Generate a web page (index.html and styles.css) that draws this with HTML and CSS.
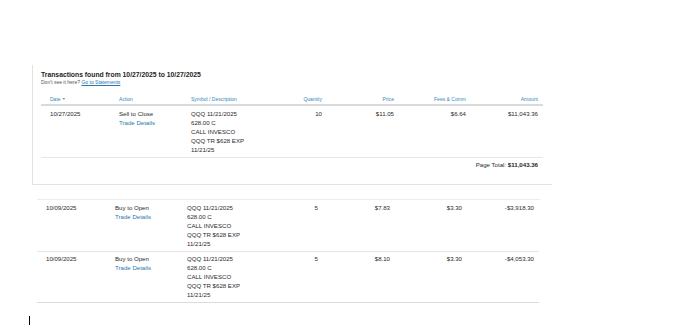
FILE: index.html
```html
<!DOCTYPE html>
<html>
<head>
<meta charset="utf-8">
<link rel="stylesheet" href="styles.css">
</head>
<body>
<div class="page">
  <section class="card">
    <h1 class="title">Transactions found from 10/27/2025 to 10/27/2025</h1>
    <p class="sub">Don't see it here? <a href="#" class="link-u">Go to Statements</a></p>
    <div class="grid head">
      <div class="c">Date <span class="arrow">&#9660;</span></div>
      <div class="c">Action</div>
      <div class="c">Symbol / Description</div>
      <div class="c r">Quantity</div>
      <div class="c r">Price</div>
      <div class="c r">Fees &amp; Comm</div>
      <div class="c r">Amount</div>
    </div>
    <div class="grid row">
      <div class="c">10/27/2025</div>
      <div class="c">Sell to Close<br><a href="#" class="link">Trade Details</a></div>
      <div class="c">QQQ 11/21/2025<br>628.00 C<br>CALL INVESCO<br>QQQ TR $628 EXP<br>11/21/25</div>
      <div class="c r">10</div>
      <div class="c r">$11.05</div>
      <div class="c r">$6.64</div>
      <div class="c r">$11,043.36</div>
    </div>
    <div class="total">Page Total: <b>$11,043.36</b></div>
  </section>

  <section class="list">
    <div class="grid row">
      <div class="c">10/09/2025</div>
      <div class="c">Buy to Open<br><a href="#" class="link">Trade Details</a></div>
      <div class="c">QQQ 11/21/2025<br>628.00 C<br>CALL INVESCO<br>QQQ TR $628 EXP<br>11/21/25</div>
      <div class="c r">5</div>
      <div class="c r">$7.83</div>
      <div class="c r">$3.30</div>
      <div class="c r">-$3,918.30</div>
    </div>
    <div class="grid row">
      <div class="c">10/09/2025</div>
      <div class="c">Buy to Open<br><a href="#" class="link">Trade Details</a></div>
      <div class="c">QQQ 11/21/2025<br>628.00 C<br>CALL INVESCO<br>QQQ TR $628 EXP<br>11/21/25</div>
      <div class="c r">5</div>
      <div class="c r">$8.10</div>
      <div class="c r">$3.30</div>
      <div class="c r">-$4,053.30</div>
    </div>
  </section>

  <div class="caret"></div>
</div>
</body>
</html>
```
FILE: styles.css
```css
* { box-sizing: border-box; }
html, body { margin: 0; padding: 0; background: #fff; }
body {
  font-family: "Liberation Sans", Arial, sans-serif;
  color: #2b2b2b;
  width: 688px;
  height: 325px;
  overflow: hidden;
}
.page { padding-top: 65px; }

.card {
  margin-left: 32px;
  width: 520px;
  border-left: 1px solid #e2e2e2;
  border-bottom: 1px solid #e2e2e2;
  padding: 5px 0 15px 8px;
}
.title {
  margin: 0;
  font-size: 6.8px;
  line-height: 9px;
  font-weight: bold;
  color: #1e1e1e;
}
.sub {
  margin: 0;
  font-size: 5px;
  line-height: 7px;
  color: #555;
}
.link-u { color: #2a78b0; text-decoration: underline; }
.link { color: #2a78b0; text-decoration: none; }

.grid {
  display: grid;
  grid-template-columns: 69px 72px 72px 73px 72px 72px 72px;
  width: 502px;
}
.c { padding-left: 9px; padding-right: 5px; }
.r { text-align: right; }

.head {
  margin-top: 10px;
  font-size: 5px;
  line-height: 7px;
  color: #3489bf;
  padding-bottom: 1px;
  border-bottom: 2px solid #dadada;
}
.arrow { font-size: 3.5px; vertical-align: 1px; }

.row {
  font-size: 6.1px;
  line-height: 9px;
  padding: 2.75px 0;
  border-bottom: 1px solid #e6e6e6;
}

.total {
  width: 502px;
  text-align: right;
  padding: 2.5px 5px 0 0;
  font-size: 6.1px;
  line-height: 9px;
  color: #2b2b2b;
}
.total b { color: #1e1e1e; }

.list {
  margin: 14px 0 0 37px;
  width: 503px;
  border-top: 1px solid #ececec;
}
.list .row:last-child { border-bottom-color: #dcdcdc; }

.caret {
  margin: 13px 0 0 29px;
  width: 1px;
  height: 10px;
  background: #000;
}
```
